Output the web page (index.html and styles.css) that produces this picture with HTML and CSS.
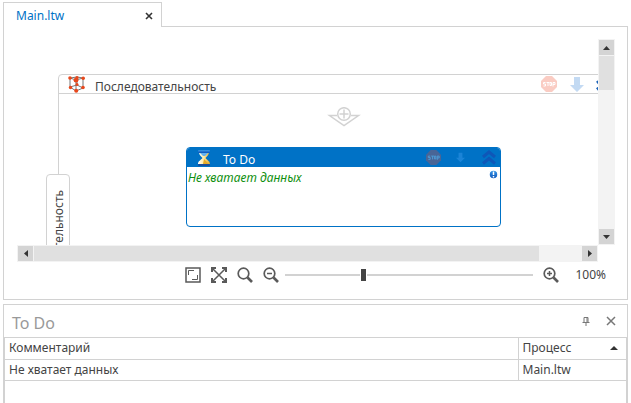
FILE: index.html
```html
<!DOCTYPE html>
<html lang="ru">
<head>
<meta charset="utf-8">
<title>Main.ltw</title>
<link rel="stylesheet" href="styles.css">
</head>
<body>
<svg class="defs" aria-hidden="true">
  <defs>
    <linearGradient id="blue" x1="0" y1="0" x2="0" y2="1"><stop offset="0" stop-color="#3c9be8"/><stop offset="1" stop-color="#0750b8"/></linearGradient>
    <linearGradient id="sand" x1="0" y1="0" x2="1" y2="0"><stop offset="0" stop-color="#fff"/><stop offset=".5" stop-color="#ffe9a0"/><stop offset="1" stop-color="#dca52c"/></linearGradient>
    <symbol id="stop" viewBox="0 0 16 16">
      <path class="octagon" d="M5 0h6l5 5v6l-5 5H5l-5-5V5z"/>
      <path class="lettering" d="M4.500 6.500h-2v1.500h2v2h-2M5.500 6.500h3M7 6.500v3.500M9 6.500h1.500v3H9zM12 10.500v-4h2v2h-2"/>
    </symbol>
    <symbol id="down" viewBox="0 0 14 15"><path d="M4 0h6v8h4l-7 7-7-7h4z"/></symbol>
    <symbol id="collapse" viewBox="0 0 16 16"><path d="M2 7l6-5 6 5M2 13.500l6-5 6 5"/></symbol>
  </defs>
</svg>

<main class="document">
  <div class="tabs">
    <div class="tab">
      <a class="tab-name" href="#doc">Main.ltw</a>
      <button class="tab-close" aria-label="Закрыть"><svg width="8" height="8" viewBox="0 0 8 8"><path d="M1 1l6 6M7 1L1 7"/></svg></button>
    </div>
    <div class="tab-rest"></div>
  </div>
  <section class="editor" id="doc">
    <div class="workspace">
      <div class="canvas">
        <div class="sequence">
          <header class="sequence-head">
            <svg class="cube" width="18" height="17" viewBox="0 0 18 17">
              <path class="edges" d="M2 2l7-1 6 1v10l-7 3-6-4zM2 2l6 2 7-2M8 4v11M9 1v8l6 3M9 9l-7 2"/>
              <g class="nodes"><circle cx="2" cy="2" r="1.800"/><circle cx="9" cy="1.800" r="1.700"/><circle cx="15.200" cy="2.200" r="1.800"/><circle cx="8" cy="4.200" r="2.400"/><circle cx="9" cy="8.500" r="1.500"/><circle cx="2.500" cy="11.500" r="1.700"/><circle cx="15" cy="11.500" r="1.800"/><circle cx="8.200" cy="14.800" r="2"/></g>
            </svg>
            <span class="sequence-title">Последовательность</span>
            <svg class="stop pale" width="16" height="16"><use href="#stop"/></svg>
            <svg class="down pale" width="14" height="15"><use href="#down"/></svg>
            <svg class="collapse" width="16" height="16"><use href="#collapse"/></svg>
          </header>
          <svg class="insert" width="34" height="20" viewBox="0 0 34 20"><path d="M10 8.500H2.500L17 18.500l14.500-10H24"/><circle cx="17" cy="7" r="6.300"/><path d="M12.500 7h9M17 2.500v9"/></svg>
          <article class="step">
            <header class="step-head">
              <svg class="hourglass" width="14" height="16" viewBox="0 0 14 16">
                <path fill="url(#sand)" d="M2 2h10c0 3-2 4-3.500 6 1.500 2 4.500 3 4.500 6H1c0-3 3-4 4.500-6C4 6 2 5 2 2z"/>
                <path fill="#63b1f0" d="M3 3h8L8 6H6z"/>
                <path fill="#e5aa28" d="M7 9l5 5H6z"/>
                <rect fill="url(#blue)" x="1" width="12" height="3" rx="1"/><rect fill="#194c9c" x="1" y="14" width="12" height="2" rx="1"/>
              </svg>
              <span class="step-title">To Do</span>
              <svg class="stop" width="15" height="15"><use href="#stop"/></svg>
              <svg class="down" width="9" height="13"><use href="#down"/></svg>
              <svg class="collapse" width="16" height="16"><use href="#collapse"/></svg>
            </header>
            <div class="step-body">
              <em class="note">Не хватает данных</em>
              <svg class="info" width="9" height="9" viewBox="0 0 9 9"><circle fill="url(#blue)" cx="4.500" cy="4.500" r="4.500"/><path d="M4.500 1.500v3.500M4.500 6v1.500"/></svg>
            </div>
          </article>
          <div class="side-tab"><span>Последовательность</span></div>
        </div>
      </div>
      <div class="vbar">
        <button aria-label="Вверх"><svg width="7" height="4" viewBox="0 0 7 4"><path d="M0 4l3.500-4L7 4z"/></svg></button>
        <div class="vthumb"></div>
        <button class="last" aria-label="Вниз"><svg width="7" height="4" viewBox="0 0 7 4"><path d="M0 0h7L3.500 4z"/></svg></button>
      </div>
      <div class="hbar">
        <button aria-label="Влево"><svg width="4" height="7" viewBox="0 0 4 7"><path d="M4 0v7L0 3.500z"/></svg></button>
        <div class="hthumb"></div>
        <button class="last" aria-label="Вправо"><svg width="4" height="7" viewBox="0 0 4 7"><path d="M0 0v7l4-3.500z"/></svg></button>
      </div>
    </div>
    <div class="zoombar">
      <button aria-label="Вписать"><svg width="16" height="16" viewBox="0 0 16 16"><path stroke-width="1.500" d="M1 1h14v14H1z"/><path stroke-width="1" d="M3.500 8V3.500H9M7 12.500h5.500V8"/></svg></button>
      <button aria-label="На весь экран"><svg width="16" height="16" viewBox="0 0 16 16"><path stroke-width="1.500" d="M2 2l12 12M14 2L2 14"/><path stroke-width="2" d="M1 5V1h4M11 1h4v4M15 11v4h-4M5 15H1v-4"/></svg></button>
      <button aria-label="Исходный масштаб"><svg width="16" height="16" viewBox="0 0 16 16"><circle stroke-width="1.700" cx="6.500" cy="6.500" r="5.300"/><path stroke-width="2.700" d="M10.500 10.500l4.500 4.500"/></svg></button>
      <button aria-label="Уменьшить"><svg width="16" height="16" viewBox="0 0 16 16"><circle stroke-width="1.700" cx="6.500" cy="6.500" r="5.300"/><path stroke-width="2.700" d="M10.500 10.500l4.500 4.500"/><path stroke-width="1.500" d="M4 6.500h5"/></svg></button>
      <input class="zoom" type="range" min="0" max="100" value="31" aria-label="Масштаб">
      <button aria-label="Увеличить"><svg width="16" height="16" viewBox="0 0 16 16"><circle stroke-width="1.700" cx="6.500" cy="6.500" r="5.300"/><path stroke-width="2.700" d="M10.500 10.500l4.500 4.500"/><path stroke-width="1.500" d="M4 6.500h5M6.500 4v5"/></svg></button>
      <output class="percent">100%</output>
    </div>
  </section>
</main>

<section class="todo">
  <header class="todo-head">
    <h2>To Do</h2>
    <button aria-label="Закрепить"><svg width="8" height="9" viewBox="0 0 8 9"><path d="M2 5.500v-5h4v5M5 .5v5M.5 5.500h7M4 5.500V9"/></svg></button>
    <button aria-label="Закрыть"><svg width="10" height="10" viewBox="0 0 10 10"><path stroke-width="1.500" d="M1 1l8 8M9 1L1 9"/></svg></button>
  </header>
  <div class="grid">
    <table>
      <thead><tr><th>Комментарий</th><th class="process"><div class="sorted">Процесс<svg width="8" height="4" viewBox="0 0 8 4"><path d="M0 4l4-4 4 4z"/></svg></div></th></tr></thead>
      <tbody><tr><td>Не хватает данных</td><td>Main.ltw</td></tr></tbody>
    </table>
  </div>
</section>
</body>
</html>
```
FILE: styles.css
```css
* { box-sizing: border-box; }
body {
  margin: 0;
  height: 100vh;
  padding: 2px 3px 0;
  display: flex;
  flex-direction: column;
  gap: 4px;
  overflow: hidden;
  background: #fff;
  color: #444;
  font: 12px/16px "Noto Sans", "Open Sans", sans-serif;
}
button { border: 0; padding: 0; background: none; display: flex; align-items: center; justify-content: center; }
svg { display: block; flex: none; fill: none; }
.defs { position: absolute; width: 0; height: 0; }

.tabs { display: flex; height: 25px; }
.tab {
  width: 159px;
  display: flex;
  align-items: center;
  justify-content: space-between;
  padding: 1px 8px 0 12px;
  border: 1px solid #d2d2d2;
  border-bottom: 0;
}
.tab-rest { flex: 1; border-bottom: 1px solid #d2d2d2; }
.tab-name { color: #0072c6; text-decoration: none; }
.tab-close svg { stroke: #333; stroke-width: 1.600px; }

.editor { border: 1px solid #d2d2d2; border-top: 0; padding: 12px 12px 11px 13px; }
.workspace { display: grid; grid-template-columns: 1fr 17px; grid-template-rows: 206px 17px; }
.canvas { overflow: hidden; padding: 35px 0 0 41px; }
.sequence {
  position: relative;
  height: 220px;
  margin-right: -31px;
  border: 1px solid #d2d2d2;
  border-radius: 4px;
  display: flex;
  flex-direction: column;
  align-items: center;
}
.sequence-head {
  align-self: stretch;
  height: 19px;
  display: flex;
  align-items: center;
  padding: 0 17px 0 9px;
  border-bottom: 1px solid #d2d2d2;
}
.edges { stroke: #777; }
.nodes { fill: #e8481c; }
.sequence-title { flex: 1; padding: 5px 0 0 9px; }
.octagon { fill: #f04a2a; }
.lettering { stroke: #fff; stroke-width: 1; }
.down { fill: #2c7cd6; }
.pale { opacity: .28; }
.sequence-head .down { margin: 0 11px 0 13px; }
.collapse { stroke: #1b62b8; stroke-width: 3; }

.insert { margin: 13px 0 20px; stroke: #d2d2d2; stroke-width: 1.500px; }
.step { width: 315px; height: 80px; border: 1px solid #0072c6; border-radius: 4px; overflow: hidden; }
.step-head { height: 19px; display: flex; align-items: center; padding: 0 3px 0 10px; background: #0072c6; color: #fff; }
.step-title { flex: 1; padding: 5px 0 0 12px; }
.step-head .stop { opacity: .3; }
.step-head .stop .octagon { fill: #b08080; }
.step-head .down { margin: 0 16px 0 15px; opacity: .3; fill: #5ab0ff; }
.step-head .collapse { stroke: #0e57b8; }
.step-body { display: flex; justify-content: space-between; padding: 3px 2px 0 1px; }
.note { color: #109010; }
.info { stroke: #fff; stroke-width: 1.500px; }

.side-tab {
  position: absolute;
  left: -13px;
  top: 99px;
  width: 24px;
  height: 150px;
  padding-top: 15px;
  border: 1px solid #d2d2d2;
  border-radius: 4px;
  background: #fff;
}
.side-tab span { display: block; writing-mode: vertical-rl; transform: rotate(180deg); margin-left: 4px; line-height: 16px; }

.vbar, .hbar { display: flex; background: #f3f3f3; gap: 1px; padding: 1px; }
.vbar { flex-direction: column; }
.vbar button, .hbar button { width: 15px; height: 15px; background: #d4d4d4; }
.vbar svg, .hbar svg { fill: #333; }
.vthumb { height: 34px; background: #e0e0e0; }
.hthumb { width: 505px; background: #e0e0e0; }
.vbar .last { margin-top: auto; }
.hbar .last { margin-left: auto; }

.zoombar { height: 26px; display: flex; align-items: center; gap: 10px; padding: 0 9px 0 168px; }
.zoombar button { width: 16px; height: 16px; stroke: #5a5a5a; }
.zoom { flex: 1; appearance: none; height: 16px; margin: 0 0 0 -4px; background: linear-gradient(#d2d2d2, #d2d2d2) center / 100% 2px no-repeat; }
.zoom::-webkit-slider-thumb { appearance: none; box-sizing: content-box; width: 5px; height: 12px; background: #444; border: solid #fff; border-width: 0 1px; }
.percent { padding-left: 6px; }

.todo { flex: 1; display: flex; flex-direction: column; border: 1px solid #d2d2d2; border-bottom: 0; }
.todo-head { height: 32px; display: flex; align-items: center; gap: 16px; padding: 0 11px 0 8px; }
.todo-head h2 { flex: 1; margin: 0; padding-top: 3px; font-size: 16px; line-height: 20px; font-weight: 400; color: #999; }
.todo-head svg { stroke: #777; }
.grid { flex: 1; border: 1px solid #d2d2d2; border-bottom: 0; }
table { width: 100%; border-collapse: collapse; table-layout: fixed; }
th, td { height: 21px; padding: 2px 4px; text-align: left; font-weight: 400; border-bottom: 1px solid #d2d2d2; }
th + th, td + td { border-left: 1px solid #d2d2d2; }
.process { width: 108px; }
.sorted { display: flex; justify-content: space-between; align-items: center; padding-right: 4px; }
.sorted svg { fill: #333; }
```
